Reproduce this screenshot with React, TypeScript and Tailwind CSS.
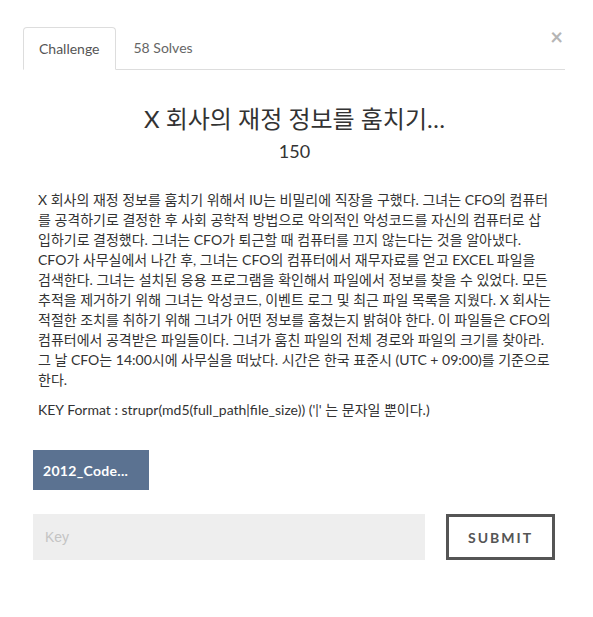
import React from 'react';

const font = { fontFamily: 'Lato, "Noto Sans CJK KR", sans-serif' };

export default function App() {
  return (
    <div className="min-h-[617px] w-[593px] bg-white text-[#333]" style={font}>
      <div className="relative pl-[23px] pr-[28px] pt-[27px]">
        <button className="absolute right-[30px] top-[26px] text-[22px] font-bold leading-none text-[#b5b5b5]">
          ×
        </button>
        {/* tabs */}
        <div className="flex border-b border-[#ddd] text-[14px]">
          <div className="-mb-px rounded-t-[4px] border border-[#ddd] border-b-white bg-white px-[15px] py-[11px] leading-[19px] text-[#555]">
            Challenge
          </div>
          <div className="px-[18px] py-[11px] leading-[19px] text-[#666]">58 Solves</div>
        </div>

        <div className="pl-[15px] pr-[14px] pt-[32px]">
          <h3 className="text-center text-[24px] leading-[34px] text-[#333]">X 회사의 재정 정보를 훔치기…</h3>
          <h4 className="text-center text-[18px] leading-[30px] text-[#333]">150</h4>

          <p className="mt-[24px] text-[14px] leading-[20px] text-[#333]">
            X 회사의 재정 정보를 훔치기 위해서 IU는 비밀리에 직장을 구했다. 그녀는 CFO의 컴퓨터를 공격하기로 결정한 후 사회 공학적 방법으로 악의적인 악성코드를 자신의 컴퓨터로 삽입하기로 결정했다. 그녀는 CFO가 퇴근할 때 컴퓨터를 끄지 않는다는 것을 알아냈다.
            <br />
            CFO가 사무실에서 나간 후, 그녀는 CFO의 컴퓨터에서 재무자료를 얻고 EXCEL 파일을 검색한다. 그녀는 설치된 응용 프로그램을 확인해서 파일에서 정보를 찾을 수 있었다. 모든 추적을 제거하기 위해 그녀는 악성코드, 이벤트 로그 및 최근 파일 목록을 지웠다. X 회사는 적절한 조치를 취하기 위해 그녀가 어떤 정보를 훔쳤는지 밝혀야 한다. 이 파일들은 CFO의 컴퓨터에서 공격받은 파일들이다. 그녀가 훔친 파일의 전체 경로와 파일의 크기를 찾아라. 그 날 CFO는 14:00시에 사무실을 떠났다. 시간은 한국 표준시 (UTC + 09:00)를 기준으로 한다.
          </p>
          <p className="mt-[10px] text-[14px] leading-[20px] text-[#333]">
            KEY Format : strupr(md5(full_path|file_size)) ('|' 는 문자일 뿐이다.)
          </p>
        </div>

        <div className="px-[10px] pt-[30px]">
          <button className="flex h-[40px] w-[116px] items-center bg-[#5b7291] px-[10px] text-[14px] font-bold tracking-[0.3px] text-white">
            2012_Code...
          </button>

          <div className="mt-[24px] flex items-center gap-[21px]">
            <input
              placeholder="Key"
              className="h-[46px] w-[392px] bg-[#eeeeee] px-[12px] text-[14px] outline-none placeholder:text-[#c4c4c4]"
              style={{ fontFamily: 'Arimo, "Liberation Sans", sans-serif' }}
            />
            <button className="h-[46px] w-[109px] border-[3px] border-[#555] text-[14px] font-bold tracking-[2px] text-[#555]">
              SUBMIT
            </button>
          </div>
        </div>
      </div>
    </div>
  );
}
